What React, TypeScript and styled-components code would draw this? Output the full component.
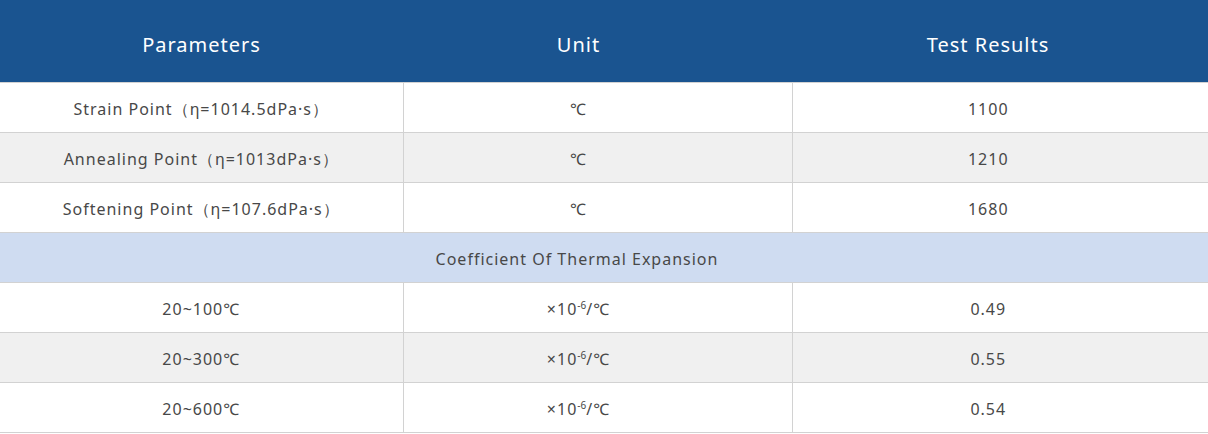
import React from "react";
import styled, { createGlobalStyle } from "styled-components";

const Global = createGlobalStyle`
  html, body { margin: 0; padding: 0; background: #fff; }
  body { font-family: "Noto Sans", "Open Sans", sans-serif; }
`;

const Table = styled.table`
  width: 1208px;
  border-collapse: collapse;
  table-layout: fixed;
`;

const pads = ["0 0 0 0", "0 38px 0 0", "0 24px 0 0"];

const HeadCell = styled.th<{ $col: number }>`
  height: 82px;
  padding: ${(p) => pads[p.$col]};
  padding-top: 8px;
  box-sizing: border-box;
  background: #1a5490;
  color: #fff;
  font-size: 20px;
  font-weight: 400;
  letter-spacing: 1px;
  text-align: center;
`;

const Row = styled.tr<{ $alt?: boolean }>`
  background: ${(p) => (p.$alt ? "#f0f0f0" : "#fff")};
`;

const Cell = styled.td<{ $col: number }>`
  height: 45px;
  padding: ${(p) => pads[p.$col]};
  padding-top: 4px;
  border: 1px solid #d2d2d2;
  border-top: none;
  color: #484848;
  font-size: 16px;
  letter-spacing: 1px;
  text-align: center;
  vertical-align: middle;
  &:first-child { border-left: none; }
  &:last-child { border-right: none; }
`;

const Body = styled.tbody`
  tr:first-child td { border-top: 1px solid #d2d2d2; }
`;

const SectionCell = styled.td`
  height: 45px;
  padding: 4px 54px 0 0;
  background: #cfdcf1;
  border-bottom: 1px solid #d2d2d2;
  color: #484848;
  font-size: 16px;
  letter-spacing: 1px;
  text-align: center;
  vertical-align: middle;
`;

const Sup = styled.sup`
  font-size: 10px;
  letter-spacing: 0;
  vertical-align: 6px;
  line-height: 0;
`;

const Exp = () => (
  <>
    ×10<Sup>-6</Sup>/℃
  </>
);

const top = [
  ["Strain Point（η=1014.5dPa·s）", "℃", "1100"],
  ["Annealing Point（η=1013dPa·s）", "℃", "1210"],
  ["Softening Point（η=107.6dPa·s）", "℃", "1680"],
];

const bottom = [
  ["20~100℃", "0.49"],
  ["20~300℃", "0.55"],
  ["20~600℃", "0.54"],
];

export default function App() {
  return (
    <>
      <Global />
      <Table>
        <colgroup>
          <col style={{ width: 403 }} />
          <col style={{ width: 389 }} />
          <col style={{ width: 416 }} />
        </colgroup>
        <thead>
          <tr>
            <HeadCell $col={0}>Parameters</HeadCell>
            <HeadCell $col={1}>Unit</HeadCell>
            <HeadCell $col={2}>Test Results</HeadCell>
          </tr>
        </thead>
        <Body>
          {top.map((r, i) => (
            <Row key={r[0]} $alt={i % 2 === 1}>
              <Cell $col={0}>{r[0]}</Cell>
              <Cell $col={1}>{r[1]}</Cell>
              <Cell $col={2}>{r[2]}</Cell>
            </Row>
          ))}
          <tr>
            <SectionCell colSpan={3}>Coefficient Of Thermal Expansion</SectionCell>
          </tr>
          {bottom.map((r, i) => (
            <Row key={r[0]} $alt={i % 2 === 1}>
              <Cell $col={0}>{r[0]}</Cell>
              <Cell $col={1}>
                <Exp />
              </Cell>
              <Cell $col={2}>{r[1]}</Cell>
            </Row>
          ))}
        </Body>
      </Table>
    </>
  );
}
